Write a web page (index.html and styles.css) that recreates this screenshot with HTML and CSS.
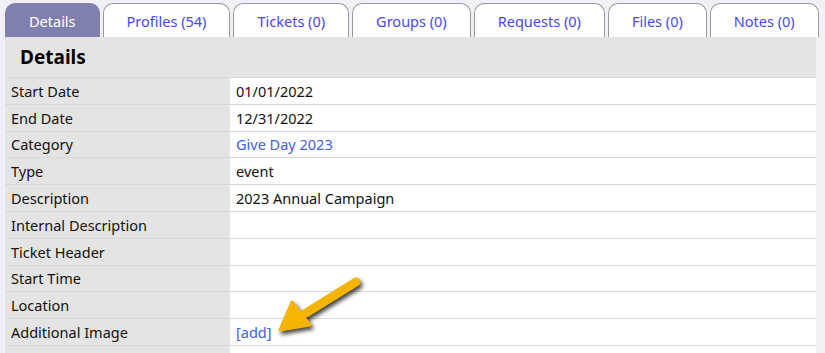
FILE: index.html
```html
<!DOCTYPE html>
<html lang="en">
  <head>
    <meta charset="UTF-8" />
    <title>Details</title>
    <link rel="stylesheet" href="styles.css">
  </head>
  <body>
    <div class="tabs">
      <a class="tab active">Details</a>
      <a class="tab">Profiles (54)</a>
      <a class="tab">Tickets (0)</a>
      <a class="tab">Groups (0)</a>
      <a class="tab">Requests (0)</a>
      <a class="tab">Files (0)</a>
      <a class="tab">Notes (0)</a>
    </div>
    <div class="panel">
      <h2>Details</h2>
      <table class="details">
        <tr><td class="label">Start Date</td><td>01/01/2022</td></tr>
        <tr><td class="label">End Date</td><td>12/31/2022</td></tr>
        <tr><td class="label">Category</td><td><a class="link">Give Day 2023</a></td></tr>
        <tr><td class="label">Type</td><td>event</td></tr>
        <tr><td class="label">Description</td><td>2023 Annual Campaign</td></tr>
        <tr><td class="label">Internal Description</td><td></td></tr>
        <tr><td class="label">Ticket Header</td><td></td></tr>
        <tr><td class="label">Start Time</td><td></td></tr>
        <tr><td class="label">Location</td><td></td></tr>
        <tr><td class="label">Additional Image</td><td><a class="link">[add]</a></td></tr>
        <tr><td class="label">Ticket Footer Link</td><td></td></tr>
      </table>
    </div>
    <!-- annotation arrow pointing at [add] -->
    <svg class="arrow" width="100" height="70" viewBox="0 0 100 70">
      <line x1="80" y1="8" x2="30" y2="39" stroke="#f5b400" stroke-width="9" stroke-linecap="round" />
      <polygon points="4,56 16,28 34,51" fill="#f5b400" stroke="#f5b400" stroke-width="3" stroke-linejoin="round" />
    </svg>
  </body>
</html>
```

FILE: styles.css
```css
body {
  margin: 0;
  background-color: #f0f0f7;
  font-family: "Noto Sans", "Open Sans", sans-serif;
  font-size: 14.5px;
  color: #111;
  overflow: hidden;
}
.tabs {
  display: flex;
  gap: 3px;
  padding: 3px 0 0 5px;
  height: 34px;
}
.tab {
  display: flex;
  align-items: center;
  justify-content: center;
  box-sizing: border-box;
  height: 34px;
  padding: 0 23px;
  flex-shrink: 0;
  background-color: #fff;
  border: 1px solid #999;
  border-bottom: none;
  border-radius: 10px 10px 0 0;
  color: #4848f0;
  white-space: nowrap;
}
.tab.active {
  background-color: #8080b0;
  border-color: #8080b0;
  color: #fff;
}
.panel {
  width: 811px;
  margin-left: 5px;
  background-color: #e4e4e4;
}
.panel h2 {
  margin: 0;
  height: 40px;
  line-height: 40px;
  padding-left: 15px;
  font-size: 19px;
  color: #000;
}
.details {
  width: 100%;
  border-collapse: collapse;
}
.details td {
  height: 26.8px;
  padding: 0 6px;
  border-top: 1px solid #d8d8d8;
  background-color: #fff;
  box-sizing: border-box;
}
.details td.label {
  width: 225px;
  background-color: #e4e4e4;
}
.link {
  color: #4060e8;
}
.arrow {
  position: absolute;
  left: 276px;
  top: 274px;
  filter: drop-shadow(2px 3px 2px rgba(0, 0, 0, 0.75));
}
```
